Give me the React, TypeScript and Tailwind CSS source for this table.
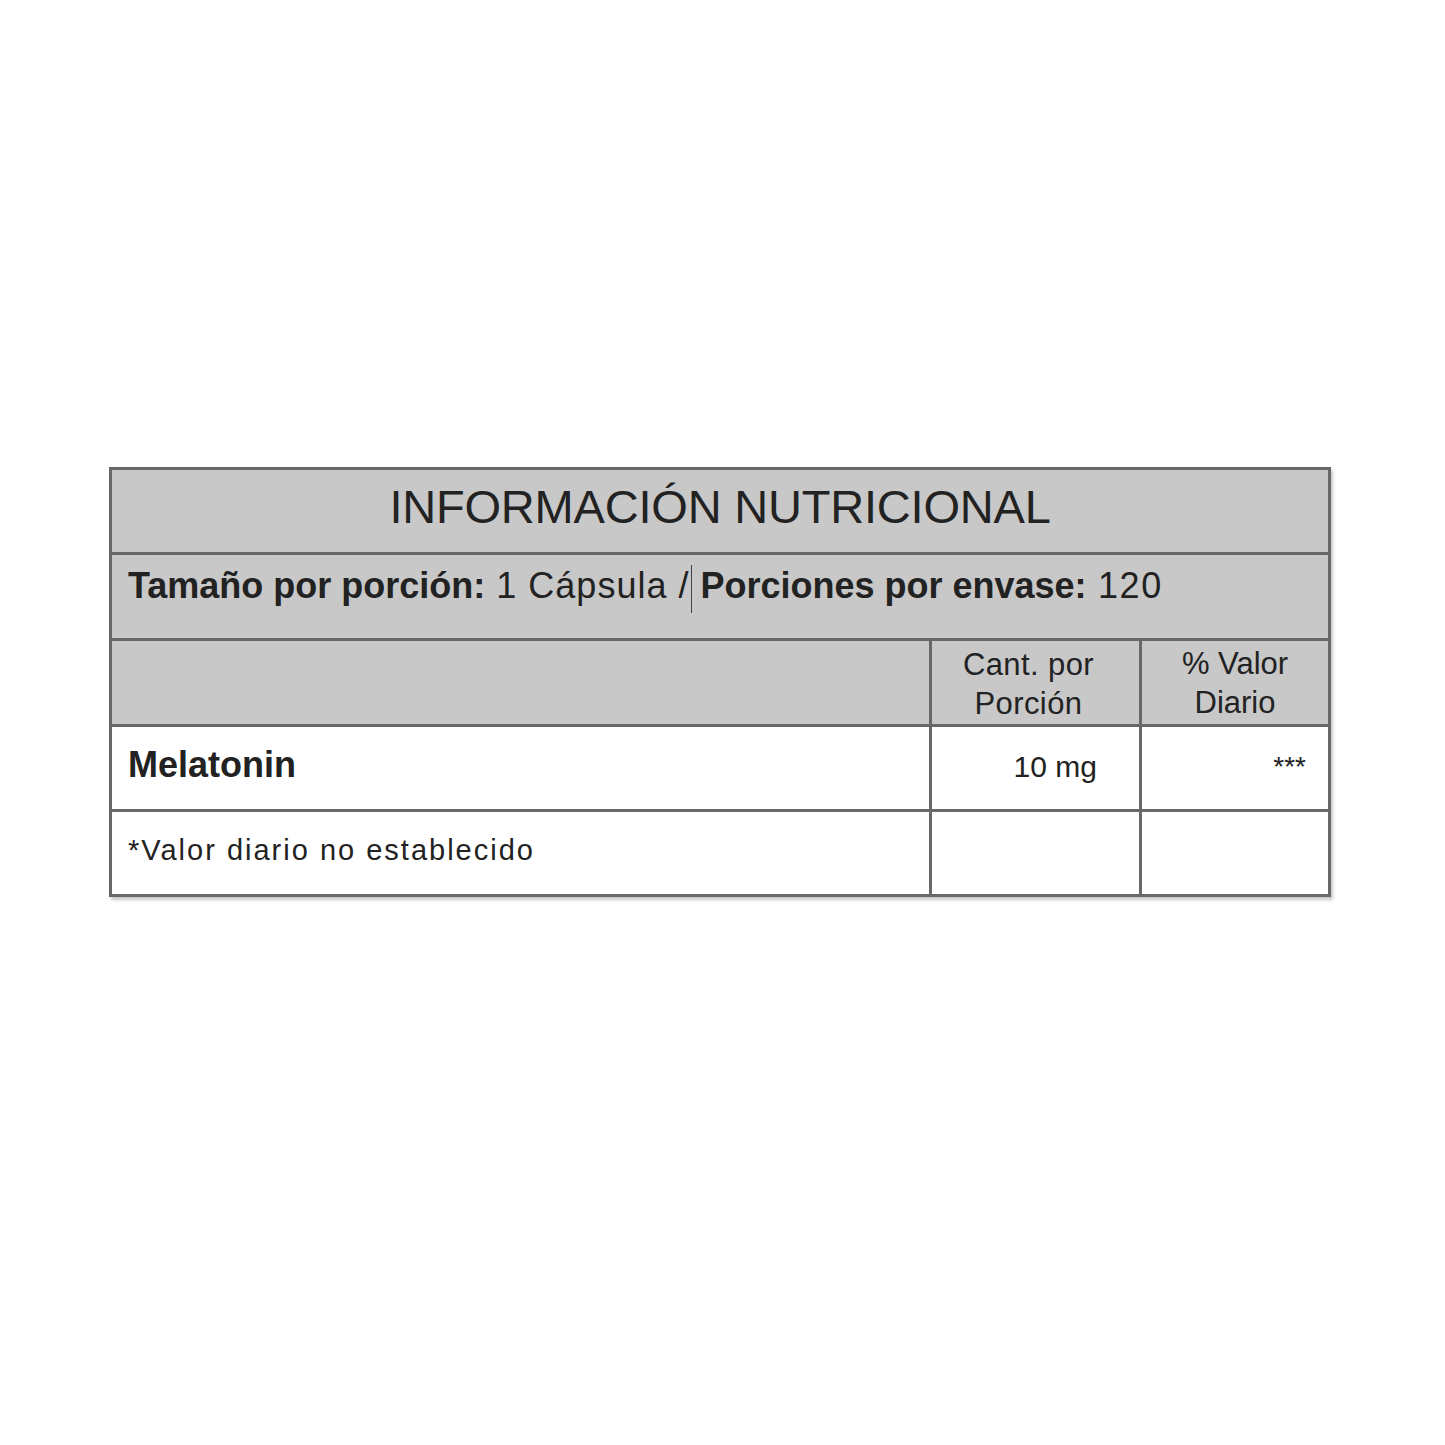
import React from "react";

// Nutrition facts panel for a melatonin supplement
export default function App() {
  return (
    <div className="min-h-[1445px] w-full bg-white pt-[467px] pl-[109px] font-['Liberation_Sans',Arial,sans-serif] text-[#222]">
      <div className="w-[1222px] border-[3px] border-[#686868] shadow-[2px_3px_3px_rgba(0,0,0,0.22)]">
        {/* Title */}
        <div className="h-[82px] bg-[#c8c8c8] pt-[13px] text-center text-[47px] leading-none tracking-[-0.2px]">
          INFORMACIÓN NUTRICIONAL
        </div>

        {/* Serving size */}
        <div className="h-[86px] border-t-[3px] border-[#686868] bg-[#c8c8c8] pl-[16px] pt-[10px] text-[36px] leading-none whitespace-nowrap">
          <span className="font-bold">Tamaño por porción:</span>
          <span className="tracking-[1px]"> 1 Cápsula /</span>
          <span className="ml-[2px] mr-[8px] inline-block h-[48px] w-px bg-[#444] align-[-15px]" />
          <span className="font-bold">Porciones por envase:</span>
          <span className="tracking-[1.5px]"> 120</span>
        </div>

        {/* Column headers */}
        <div className="flex h-[86px] border-t-[3px] border-[#686868] bg-[#c8c8c8]">
          <div className="w-[817px]" />
          <div className="w-[210px] border-l-[3px] border-[#686868] pt-[4px] pr-[14px] text-center text-[31px] leading-[39px] tracking-[0.4px]">
            Cant. por
            <br />
            Porción
          </div>
          <div className="w-[189px] border-l-[3px] border-[#686868] pt-[3px] text-center text-[31px] leading-[39px]">
            % Valor
            <br />
            Diario
          </div>
        </div>

        {/* Nutrient row */}
        <div className="flex h-[85px] border-t-[3px] border-[#686868] bg-white leading-none">
          <div className="w-[817px] pl-[16px] pt-[20px] text-[36px] font-bold">Melatonin</div>
          <div className="w-[210px] border-l-[3px] border-[#686868] pr-[42px] pt-[25px] text-right text-[30px]">
            10 mg
          </div>
          <div className="w-[189px] border-l-[3px] border-[#686868] pr-[22px] pt-[26px] text-right text-[28px]">
            ***
          </div>
        </div>

        {/* Footnote */}
        <div className="flex h-[85px] border-t-[3px] border-[#686868] bg-white leading-none">
          <div className="w-[817px] pl-[16px] pt-[24px] text-[29px] tracking-[2px] whitespace-nowrap">
            *Valor diario no establecido
          </div>
          <div className="w-[210px] border-l-[3px] border-[#686868]" />
          <div className="w-[189px] border-l-[3px] border-[#686868]" />
        </div>
      </div>
    </div>
  );
}
